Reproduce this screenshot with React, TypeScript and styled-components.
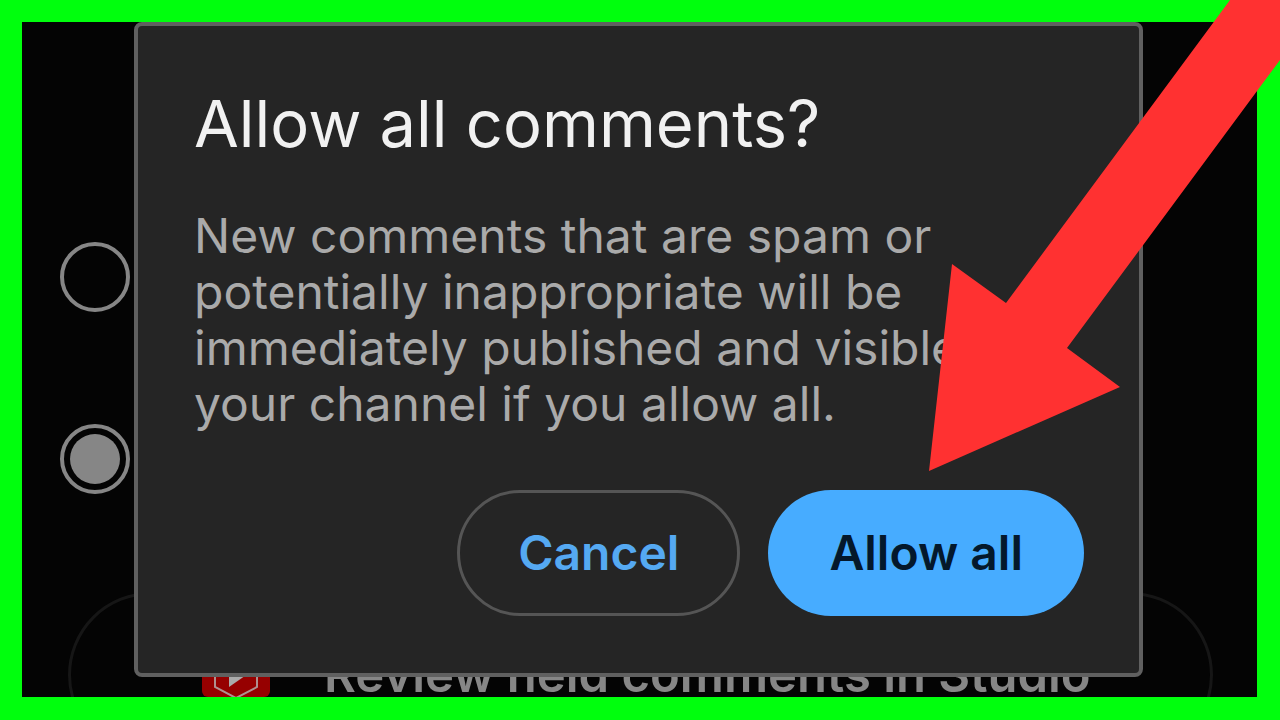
import React from "react";
import styled, { createGlobalStyle } from "styled-components";

const GlobalStyle = createGlobalStyle`
  *, *::before, *::after { box-sizing: border-box; }
  body {
    margin: 0;
    background: #00ff0d;
    font-family: Inter, "Liberation Sans", sans-serif;
  }
`;

const Frame = styled.div`
  position: relative;
  display: flex;
  height: 100vh;
  padding: 22px 23px 23px 22px;
  background: #00ff0d;
  overflow: hidden;
`;

const Screen = styled.main`
  position: relative;
  flex: 1;
  min-width: 0;
  background: #040404;
  overflow: hidden;
`;

const Settings = styled.form`
  display: flex;
  flex-direction: column;
  gap: 98px;
  padding: 220px 44px 0 38px;
`;

const Options = styled.div`
  display: flex;
  flex-direction: column;
  gap: 112px;
`;

const Radio = styled.input`
  appearance: none;
  width: 70px;
  height: 70px;
  margin: 0;
  padding: 6px;
  border: 4px solid #868686;
  border-radius: 50%;
  background-clip: content-box;

  &:checked {
    background-color: #868686;
  }
`;

const ReviewButton = styled.button`
  display: flex;
  align-items: center;
  flex-shrink: 0;
  gap: 54px;
  height: 166px;
  margin-left: 8px;
  padding: 0 100px 0 131px;
  border: 3px solid #161616;
  border-radius: 83px;
  background: transparent;
  color: #868686;
  font: 600 49px/56px Inter, "Liberation Sans", sans-serif;
  white-space: nowrap;
`;

const Overlay = styled.div`
  position: absolute;
  inset: 0;
  padding: 0 114px 20px 112px;
`;

const Dialog = styled.section`
  display: flex;
  flex-direction: column;
  min-height: 100%;
  padding: 58px 55px 57px 56px;
  border: 4px solid #606060;
  border-radius: 8px;
  background: #252525;
`;

const Title = styled.h1`
  margin: 0 0 44px;
  color: #f1f1f1;
  font-size: 65px;
  font-weight: 400;
  line-height: 80px;
`;

const Message = styled.p`
  margin: 0 0 58px;
  color: #aaaaaa;
  font-size: 48px;
  line-height: 56px;
`;

const Actions = styled.div`
  display: flex;
  justify-content: flex-end;
  gap: 28px;
`;

const ActionButton = styled.button<{ $primary?: boolean }>`
  height: 126px;
  padding: 0 ${(p) => (p.$primary ? 61 : 58)}px;
  border: ${(p) => (p.$primary ? "0" : "3px solid #555555")};
  border-radius: 63px;
  background: ${(p) => (p.$primary ? "#47acff" : "transparent")};
  color: ${(p) => (p.$primary ? "#04182b" : "#55a9f2")};
  font: 600 48px/56px Inter, "Liberation Sans", sans-serif;
  white-space: nowrap;
`;

const Logo = styled.svg`
  flex-shrink: 0;
  width: 68px;
  height: 68px;
`;

const Arrow = styled.svg`
  position: absolute;
  top: 0;
  right: 0;
  width: 351px;
  height: 471px;
`;

function StudioLogo() {
  return (
    <Logo viewBox="0 0 68 68" aria-hidden="true">
      <rect width="68" height="56" rx="6" fill="#960000" />
      <path d="M34 0 L55 12 V46 L34 57 L13 46 V12 Z" fill="none" stroke="#b09090" strokeWidth="2" />
      <path d="M27 14 L50 30 L27 46 Z" fill="#aaaaaa" />
    </Logo>
  );
}

export default function App() {
  return (
    <>
      <GlobalStyle />
      <Frame>
        <Screen>
          <Settings>
            <Options role="radiogroup" aria-label="Comment moderation">
              <Radio type="radio" name="moderation" aria-label="Hold comments" />
              <Radio type="radio" name="moderation" aria-label="Allow comments" defaultChecked />
            </Options>
            <ReviewButton type="button">
              <StudioLogo />
              Review held comments in Studio
            </ReviewButton>
          </Settings>
          <Overlay>
            <Dialog role="dialog" aria-labelledby="dialog-title">
              <Title id="dialog-title">Allow all comments?</Title>
              <Message>
                New comments that are spam or
                <br />
                potentially inappropriate will be
                <br />
                immediately published and visible on
                <br />
                your channel if you allow all.
              </Message>
              <Actions>
                <ActionButton type="button">Cancel</ActionButton>
                <ActionButton type="button" $primary>
                  Allow all
                </ActionButton>
              </Actions>
            </Dialog>
          </Overlay>
        </Screen>
        <Arrow viewBox="0 0 351 471" aria-hidden="true">
          <path d="M0 471 L23 264 L77 303 L301 0 H351 V60 L138 348 L191 387 Z" fill="#ff3131" />
        </Arrow>
      </Frame>
    </>
  );
}
